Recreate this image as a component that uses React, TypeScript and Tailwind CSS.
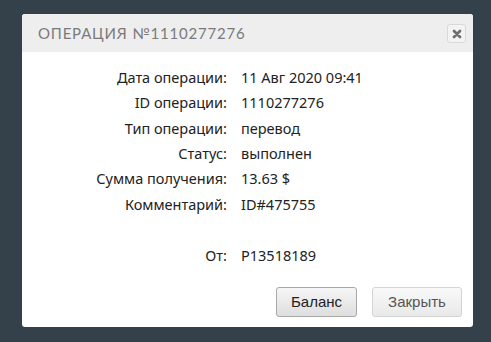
import React from "react";

const rows: [string, string][] = [
  ["Дата операции:", "11 Авг 2020 09:41"],
  ["ID операции:", "1110277276"],
  ["Тип операции:", "перевод"],
  ["Статус:", "выполнен"],
  ["Сумма получения:", "13.63 $"],
  ["Комментарий:", "ID#475755"],
  ["", ""],
  ["От:", "P13518189"],
];

export default function App() {
  return (
    <div className="w-[491px] h-[342px] bg-[#34414a] pt-[14px] pl-[22px] overflow-hidden">
      <div className="w-[451px] h-[313px] bg-white rounded-[3px] flex flex-col overflow-hidden">
        <div className="h-[38px] bg-[#eeeeee] flex items-center justify-between pl-[16px] pr-[7px]">
          <span
            className="text-[15px] tracking-[0.8px] text-[#7a7a7a] uppercase"
            style={{ fontFamily: "Lato, 'DejaVu Sans', sans-serif" }}
          >
            Операция №1110277276
          </span>
          <button className="w-[19px] h-[19px] mt-[1px] flex items-center justify-center rounded-[3px] border border-[#d9d9d9] bg-[#f3f3f3]">
            <svg width="10" height="10" viewBox="0 0 10 10">
              <path d="M2 2 L8 8 M8 2 L2 8" stroke="#6e6e6e" strokeWidth="2.8" strokeLinecap="round" />
            </svg>
          </button>
        </div>
        <div
          className="flex-1 pt-[13px] text-[14.5px] text-[#222]"
          style={{ fontFamily: "'Noto Sans', 'DejaVu Sans', sans-serif" }}
        >
          {rows.map(([l, v], i) => (
            <div key={i} className="h-[25.4px] flex items-center">
              <div className="w-[205px] text-right">{l}</div>
              <div className="pl-[14px]">{v}</div>
            </div>
          ))}
        </div>
        <div
          className="flex justify-end gap-[15px] pr-[11px] pb-[10px] text-[15px]"
          style={{ fontFamily: "'Liberation Sans', Arial, sans-serif" }}
        >
          <button className="w-[81px] h-[30px] rounded-[3px] border border-[#a8a8a8] bg-gradient-to-b from-[#f6f6f6] to-[#dedede] text-[#222]">
            Баланс
          </button>
          <button className="w-[90px] h-[30px] rounded-[3px] border border-[#d4d4d4] bg-gradient-to-b from-[#f9f9f9] to-[#e9e9e9] text-[#555]">
            Закрыть
          </button>
        </div>
      </div>
    </div>
  );
}
